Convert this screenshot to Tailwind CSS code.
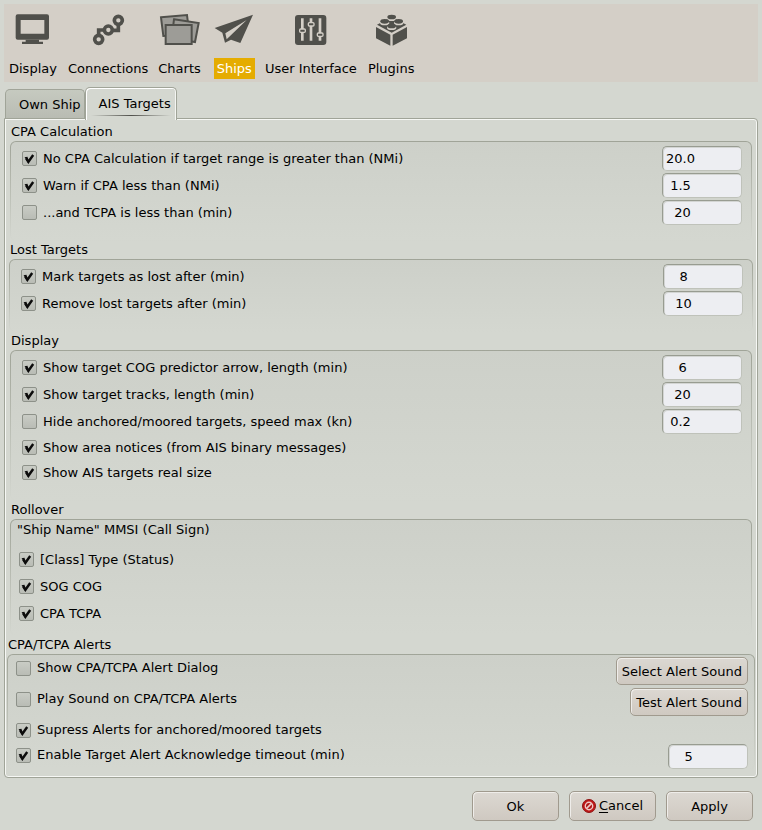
<!DOCTYPE html>
<html lang="en">
<head>
<meta charset="utf-8">
<title>Options</title>
<script src="https://cdn.jsdelivr.net/npm/@tailwindcss/browser@4"></script>
</head>
<body class="min-h-screen bg-[#d4d7d0] p-1 font-['DejaVu_Sans',sans-serif] text-[13px] leading-[18px] text-black">

<svg class="hidden" aria-hidden="true">
  <symbol id="tick" viewBox="0 0 15 15"><path d="M4.2 7.6 6.4 10.8 11.2 4" fill="none" stroke="#0c0c0c" stroke-width="2.4"/><path d="M2.6 6.2 5.4 5.8 6.8 9.6 6.2 12.4z" fill="#0c0c0c"/></symbol>
</svg>

<nav class="flex h-[78px] items-start gap-[5px] bg-[#d4cfc7] pt-[9px] pl-[2px]">
  <button class="flex flex-col items-center gap-3">
    <svg class="h-[33px] w-[35px]" viewBox="45 39 105 99" fill="#50504b"><path fill-rule="evenodd" d="M53 43H141q6 0 6 6V113q0 6-6 6H53q-6 0-6-6V49q0-6 6-6ZM62 60V101H133V60Z"/><path d="M77 119H117V125H129V132H66V125H77Z"/></svg>
    <span class="px-[3px] leading-[21px]">Display</span>
  </button>
  <button class="flex flex-col items-center gap-3">
    <svg class="h-[33px] w-[33px]" viewBox="270 39 99 99" fill="none" stroke="#50504b"><circle cx="290" cy="118" r="12" stroke-width="11"/><circle cx="319" cy="90" r="12" stroke-width="11"/><circle cx="349" cy="61" r="12" stroke-width="11"/><path d="M290 106V90H306M332 91H349V75" stroke-width="11"/></svg>
    <span class="px-[3px] leading-[21px]">Connections</span>
  </button>
  <button class="-ml-px flex flex-col items-center gap-3">
    <svg class="h-[33px] w-[42px]" viewBox="474 39 126 99" fill="#9d9c97" stroke="#50504b" stroke-width="6"><path d="M480 52 558 45 565 103 487 108Z"/><path d="M519 58 593 69 582 126 512 114Z"/><path d="M494 75H572V132H494Z"/></svg>
    <span class="px-[3px] leading-[21px]">Charts</span>
  </button>
  <button class="ml-[5px] flex flex-col items-center gap-3" aria-current="page">
    <svg class="h-[33px] w-[40px]" viewBox="639 39 120 99" fill="#50504b"><path fill-rule="evenodd" d="M756 44 718 129 690 119 672 128 664 98 641 84ZM737 60 673 100 677 118Z"/></svg>
    <span class="bg-[#e5ac00] px-[3px] leading-[21px] text-white">Ships</span>
  </button>
  <button class="ml-[2px] flex flex-col items-center gap-3">
    <svg class="h-[33px] w-[33px]" viewBox="285 39 99 99"><rect x="288" y="45" width="94" height="90" rx="9" fill="#50504b"/><g stroke="#d4cfc7" fill="#50504b"><path d="M310 55V122M336 55V122M363 55V122" stroke-width="8"/><rect x="302" y="87" width="17" height="10" rx="3" stroke-width="4"/><rect x="328" y="68" width="17" height="10" rx="3" stroke-width="4"/><rect x="355" y="99" width="17" height="10" rx="3" stroke-width="4"/></g></svg>
    <span class="px-[3px] leading-[21px]">User Interface</span>
  </button>
  <button class="flex flex-col items-center gap-3">
    <svg class="h-[33px] w-[33px]" viewBox="522 39 99 99" fill="#50504b"><path d="M525 81 568 104V137L525 115ZM618 81 575 104V137L618 115Z"/><path d="M528 74 572 50 616 74 572 98Z"/><g fill="#d4cfc7"><ellipse cx="572" cy="56" rx="14" ry="7"/><ellipse cx="551" cy="69" rx="14" ry="7"/><ellipse cx="593" cy="69" rx="14" ry="7"/><ellipse cx="572" cy="83" rx="14" ry="7"/></g><ellipse cx="572" cy="51" rx="13" ry="7"/><ellipse cx="551" cy="64" rx="13" ry="7"/><ellipse cx="593" cy="64" rx="13" ry="7"/><ellipse cx="572" cy="78" rx="13" ry="7"/></svg>
    <span class="px-[3px] leading-[21px]">Plugins</span>
  </button>
</nav>

<main>
  <div class="relative z-10 -mb-[2px] flex items-end pt-[5px] pl-px" role="tablist">
    <button role="tab" aria-selected="false" class="mb-[2px] h-[29px] rounded-t-[5px] border border-b-0 border-[#a0a498] bg-linear-to-b from-[#c6cac0] to-[#b9bcb3] pt-px pr-[3px] pl-[13px]">Own Ship</button>
    <button role="tab" aria-selected="true" class="flex h-[33px] flex-col rounded-t-[5px] border border-b-0 border-[#a0a498] bg-[#d4d7d0] px-[5px] pt-[7px] shadow-[inset_1px_1px_0_#fff,inset_-1px_0_0_#f4f5f2]"><span class="pl-[8px]">AIS Targets</span><span class="mt-[2px] h-px w-full bg-linear-to-r from-transparent via-[#50504b] to-transparent"></span></button>
  </div>

  <div role="tabpanel" class="rounded-[4px] rounded-tl-none border border-[#a0a498] px-px pt-[4px] pb-[7px] shadow-[inset_0_0_0_1px_#f6f7f4]">

    <section class="px-[4px]">
      <h2 class="pl-px">CPA Calculation</h2>
      <div class="rounded-[6px] bg-linear-to-b from-[#a0a498] to-[#d4d7d0] p-px">
        <div class="flex flex-col gap-[2px] rounded-[5px] bg-linear-to-b from-[#cdd0c9] to-[#d4d7d0] pt-[4px] pr-[9px] pb-[15px] pl-[11px]">
          <div class="flex h-[25px] items-center justify-between">
            <label class="flex items-center gap-[6px]"><span class="grid"><input type="checkbox" checked class="peer col-start-1 row-start-1 h-[15px] w-[15px] appearance-none rounded-[2px] border border-[#8d9189] bg-linear-to-b from-[#c9ccc5] to-[#b9bcb5]"><svg class="pointer-events-none invisible col-start-1 row-start-1 h-[15px] w-[15px] peer-checked:visible"><use href="#tick"/></svg></span>No CPA Calculation if target range is greater than (NMi)</label>
            <input type="text" aria-label="Maximum target range (NMi)" value="20.0" class="h-[25px] w-[80px] rounded-[5px] border border-[#bfc2ba] border-t-[#989c91] border-l-[#989c91] bg-[#edeef2] pl-[3px] shadow-[inset_1px_1px_0_#d3d5d3]">
          </div>
          <div class="flex h-[25px] items-center justify-between">
            <label class="flex items-center gap-[6px]"><span class="grid"><input type="checkbox" checked class="peer col-start-1 row-start-1 h-[15px] w-[15px] appearance-none rounded-[2px] border border-[#8d9189] bg-linear-to-b from-[#c9ccc5] to-[#b9bcb5]"><svg class="pointer-events-none invisible col-start-1 row-start-1 h-[15px] w-[15px] peer-checked:visible"><use href="#tick"/></svg></span>Warn if CPA less than (NMi)</label>
            <input type="text" aria-label="Minimum CPA (NMi)" value=" 1.5" class="h-[25px] w-[80px] rounded-[5px] border border-[#bfc2ba] border-t-[#989c91] border-l-[#989c91] bg-[#edeef2] pl-[3px] shadow-[inset_1px_1px_0_#d3d5d3]">
          </div>
          <div class="flex h-[25px] items-center justify-between">
            <label class="flex items-center gap-[6px]"><span class="grid"><input type="checkbox" class="peer col-start-1 row-start-1 h-[15px] w-[15px] appearance-none rounded-[2px] border border-[#8d9189] bg-linear-to-b from-[#c9ccc5] to-[#b9bcb5]"><svg class="pointer-events-none invisible col-start-1 row-start-1 h-[15px] w-[15px] peer-checked:visible"><use href="#tick"/></svg></span>...and TCPA is less than (min)</label>
            <input type="text" aria-label="Minimum TCPA (min)" value="  20" class="h-[25px] w-[80px] rounded-[5px] border border-[#bfc2ba] border-t-[#989c91] border-l-[#989c91] bg-[#edeef2] pl-[3px] shadow-[inset_1px_1px_0_#d3d5d3]">
          </div>
        </div>
      </div>
    </section>

    <section class="px-[3px]">
      <h2 class="pl-px">Lost Targets</h2>
      <div class="rounded-[6px] bg-linear-to-b from-[#a0a498] to-[#d4d7d0] p-px">
        <div class="flex flex-col gap-[2px] rounded-[5px] bg-linear-to-b from-[#cdd0c9] to-[#d4d7d0] pt-[4px] pr-[9px] pb-[15px] pl-[11px]">
          <div class="flex h-[25px] items-center justify-between">
            <label class="flex items-center gap-[6px]"><span class="grid"><input type="checkbox" checked class="peer col-start-1 row-start-1 h-[15px] w-[15px] appearance-none rounded-[2px] border border-[#8d9189] bg-linear-to-b from-[#c9ccc5] to-[#b9bcb5]"><svg class="pointer-events-none invisible col-start-1 row-start-1 h-[15px] w-[15px] peer-checked:visible"><use href="#tick"/></svg></span>Mark targets as lost after (min)</label>
            <input type="text" aria-label="Mark lost after (min)" value="   8" class="h-[25px] w-[80px] rounded-[5px] border border-[#bfc2ba] border-t-[#989c91] border-l-[#989c91] bg-[#edeef2] pl-[3px] shadow-[inset_1px_1px_0_#d3d5d3]">
          </div>
          <div class="flex h-[25px] items-center justify-between">
            <label class="flex items-center gap-[6px]"><span class="grid"><input type="checkbox" checked class="peer col-start-1 row-start-1 h-[15px] w-[15px] appearance-none rounded-[2px] border border-[#8d9189] bg-linear-to-b from-[#c9ccc5] to-[#b9bcb5]"><svg class="pointer-events-none invisible col-start-1 row-start-1 h-[15px] w-[15px] peer-checked:visible"><use href="#tick"/></svg></span>Remove lost targets after (min)</label>
            <input type="text" aria-label="Remove lost after (min)" value="  10" class="h-[25px] w-[80px] rounded-[5px] border border-[#bfc2ba] border-t-[#989c91] border-l-[#989c91] bg-[#edeef2] pl-[3px] shadow-[inset_1px_1px_0_#d3d5d3]">
          </div>
        </div>
      </div>
    </section>

    <section class="px-[4px]">
      <h2 class="pl-px">Display</h2>
      <div class="rounded-[6px] bg-linear-to-b from-[#a0a498] to-[#d4d7d0] p-px">
        <div class="flex flex-col gap-[2px] rounded-[5px] bg-linear-to-b from-[#cdd0c9] to-[#d4d7d0] pt-[4px] pr-[9px] pb-4 pl-[11px]">
          <div class="flex h-[25px] items-center justify-between">
            <label class="flex items-center gap-[6px]"><span class="grid"><input type="checkbox" checked class="peer col-start-1 row-start-1 h-[15px] w-[15px] appearance-none rounded-[2px] border border-[#8d9189] bg-linear-to-b from-[#c9ccc5] to-[#b9bcb5]"><svg class="pointer-events-none invisible col-start-1 row-start-1 h-[15px] w-[15px] peer-checked:visible"><use href="#tick"/></svg></span>Show target COG predictor arrow, length (min)</label>
            <input type="text" aria-label="COG predictor length (min)" value="   6" class="h-[25px] w-[80px] rounded-[5px] border border-[#bfc2ba] border-t-[#989c91] border-l-[#989c91] bg-[#edeef2] pl-[3px] shadow-[inset_1px_1px_0_#d3d5d3]">
          </div>
          <div class="flex h-[25px] items-center justify-between">
            <label class="flex items-center gap-[6px]"><span class="grid"><input type="checkbox" checked class="peer col-start-1 row-start-1 h-[15px] w-[15px] appearance-none rounded-[2px] border border-[#8d9189] bg-linear-to-b from-[#c9ccc5] to-[#b9bcb5]"><svg class="pointer-events-none invisible col-start-1 row-start-1 h-[15px] w-[15px] peer-checked:visible"><use href="#tick"/></svg></span>Show target tracks, length (min)</label>
            <input type="text" aria-label="Track length (min)" value="  20" class="h-[25px] w-[80px] rounded-[5px] border border-[#bfc2ba] border-t-[#989c91] border-l-[#989c91] bg-[#edeef2] pl-[3px] shadow-[inset_1px_1px_0_#d3d5d3]">
          </div>
          <div class="flex h-[25px] items-center justify-between">
            <label class="flex items-center gap-[6px]"><span class="grid"><input type="checkbox" class="peer col-start-1 row-start-1 h-[15px] w-[15px] appearance-none rounded-[2px] border border-[#8d9189] bg-linear-to-b from-[#c9ccc5] to-[#b9bcb5]"><svg class="pointer-events-none invisible col-start-1 row-start-1 h-[15px] w-[15px] peer-checked:visible"><use href="#tick"/></svg></span>Hide anchored/moored targets, speed max (kn)</label>
            <input type="text" aria-label="Moored speed max (kn)" value=" 0.2" class="h-[25px] w-[80px] rounded-[5px] border border-[#bfc2ba] border-t-[#989c91] border-l-[#989c91] bg-[#edeef2] pl-[3px] shadow-[inset_1px_1px_0_#d3d5d3]">
          </div>
          <label class="flex h-[23px] items-center gap-[6px]"><span class="grid"><input type="checkbox" checked class="peer col-start-1 row-start-1 h-[15px] w-[15px] appearance-none rounded-[2px] border border-[#8d9189] bg-linear-to-b from-[#c9ccc5] to-[#b9bcb5]"><svg class="pointer-events-none invisible col-start-1 row-start-1 h-[15px] w-[15px] peer-checked:visible"><use href="#tick"/></svg></span>Show area notices (from AIS binary messages)</label>
          <label class="flex h-[23px] items-center gap-[6px]"><span class="grid"><input type="checkbox" checked class="peer col-start-1 row-start-1 h-[15px] w-[15px] appearance-none rounded-[2px] border border-[#8d9189] bg-linear-to-b from-[#c9ccc5] to-[#b9bcb5]"><svg class="pointer-events-none invisible col-start-1 row-start-1 h-[15px] w-[15px] peer-checked:visible"><use href="#tick"/></svg></span>Show AIS targets real size</label>
        </div>
      </div>
    </section>

    <section class="px-[4px]">
      <h2 class="pl-px">Rollover</h2>
      <div class="rounded-[6px] bg-linear-to-b from-[#a0a498] to-[#d4d7d0] p-px">
        <div class="flex flex-col gap-[2px] rounded-[5px] bg-linear-to-b from-[#cdd0c9] to-[#d4d7d0] pr-[9px] pb-[9px] pl-[8px]">
          <p class="-ml-[2px] h-[25px] leading-[20px]">"Ship Name" MMSI (Call Sign)</p>
          <label class="flex h-[25px] items-center gap-[6px]"><span class="grid"><input type="checkbox" checked class="peer col-start-1 row-start-1 h-[15px] w-[15px] appearance-none rounded-[2px] border border-[#8d9189] bg-linear-to-b from-[#c9ccc5] to-[#b9bcb5]"><svg class="pointer-events-none invisible col-start-1 row-start-1 h-[15px] w-[15px] peer-checked:visible"><use href="#tick"/></svg></span>[Class] Type (Status)</label>
          <label class="flex h-[25px] items-center gap-[6px]"><span class="grid"><input type="checkbox" checked class="peer col-start-1 row-start-1 h-[15px] w-[15px] appearance-none rounded-[2px] border border-[#8d9189] bg-linear-to-b from-[#c9ccc5] to-[#b9bcb5]"><svg class="pointer-events-none invisible col-start-1 row-start-1 h-[15px] w-[15px] peer-checked:visible"><use href="#tick"/></svg></span>SOG COG</label>
          <label class="flex h-[25px] items-center gap-[6px]"><span class="grid"><input type="checkbox" checked class="peer col-start-1 row-start-1 h-[15px] w-[15px] appearance-none rounded-[2px] border border-[#8d9189] bg-linear-to-b from-[#c9ccc5] to-[#b9bcb5]"><svg class="pointer-events-none invisible col-start-1 row-start-1 h-[15px] w-[15px] peer-checked:visible"><use href="#tick"/></svg></span>CPA TCPA</label>
        </div>
      </div>
    </section>

    <section class="px-px">
      <h2 class="pl-px">CPA/TCPA Alerts</h2>
      <div class="rounded-[6px] bg-linear-to-b from-[#a0a498] to-[#d4d7d0] p-px">
        <div class="flex flex-col gap-[3px] rounded-[5px] bg-linear-to-b from-[#cdd0c9] to-[#d4d7d0] pt-[2px] pr-[6px] pl-[8px]">
          <div class="flex h-7 items-start justify-between">
            <label class="flex h-[22px] items-center gap-[6px]"><span class="grid"><input type="checkbox" class="peer col-start-1 row-start-1 h-[15px] w-[15px] appearance-none rounded-[2px] border border-[#8d9189] bg-linear-to-b from-[#c9ccc5] to-[#b9bcb5]"><svg class="pointer-events-none invisible col-start-1 row-start-1 h-[15px] w-[15px] peer-checked:visible"><use href="#tick"/></svg></span>Show CPA/TCPA Alert Dialog</label>
            <button class="h-7 rounded-[5px] border border-[#a09a8e] bg-linear-to-b from-[#dcd8d2] to-[#cfc9c1] px-[5px] pt-px shadow-[inset_1px_1px_0_#efedea]">Select Alert Sound</button>
          </div>
          <div class="flex h-7 items-start justify-between">
            <label class="flex h-[22px] items-center gap-[6px]"><span class="grid"><input type="checkbox" class="peer col-start-1 row-start-1 h-[15px] w-[15px] appearance-none rounded-[2px] border border-[#8d9189] bg-linear-to-b from-[#c9ccc5] to-[#b9bcb5]"><svg class="pointer-events-none invisible col-start-1 row-start-1 h-[15px] w-[15px] peer-checked:visible"><use href="#tick"/></svg></span>Play Sound on CPA/TCPA Alerts</label>
            <button class="h-7 rounded-[5px] border border-[#a09a8e] bg-linear-to-b from-[#dcd8d2] to-[#cfc9c1] px-[5px] pt-px shadow-[inset_1px_1px_0_#efedea]">Test Alert Sound</button>
          </div>
          <label class="flex h-[22px] items-center gap-[6px]"><span class="grid"><input type="checkbox" checked class="peer col-start-1 row-start-1 h-[15px] w-[15px] appearance-none rounded-[2px] border border-[#8d9189] bg-linear-to-b from-[#c9ccc5] to-[#b9bcb5]"><svg class="pointer-events-none invisible col-start-1 row-start-1 h-[15px] w-[15px] peer-checked:visible"><use href="#tick"/></svg></span>Supress Alerts for anchored/moored targets</label>
          <div class="flex h-[25px] items-start justify-between">
            <label class="flex h-[22px] items-center gap-[6px]"><span class="grid"><input type="checkbox" checked class="peer col-start-1 row-start-1 h-[15px] w-[15px] appearance-none rounded-[2px] border border-[#8d9189] bg-linear-to-b from-[#c9ccc5] to-[#b9bcb5]"><svg class="pointer-events-none invisible col-start-1 row-start-1 h-[15px] w-[15px] peer-checked:visible"><use href="#tick"/></svg></span>Enable Target Alert Acknowledge timeout (min)</label>
            <input type="text" aria-label="Acknowledge timeout (min)" value="   5" class="h-[25px] w-[80px] rounded-[5px] border border-[#bfc2ba] border-t-[#989c91] border-l-[#989c91] bg-[#edeef2] pl-[3px] shadow-[inset_1px_1px_0_#d3d5d3]">
          </div>
        </div>
      </div>
    </section>
  </div>
</main>

<footer class="flex justify-end gap-[10px] pt-[13px] pr-[5px]">
  <button class="h-[30px] w-[87px] rounded-[5px] border border-[#a09a8e] bg-linear-to-b from-[#dcd8d2] to-[#cfc9c1] pt-px shadow-[inset_1px_1px_0_#efedea]">Ok</button>
  <button class="flex h-[30px] w-[87px] items-center justify-center gap-[3px] rounded-[5px] border border-[#a09a8e] bg-linear-to-b from-[#dcd8d2] to-[#cfc9c1] shadow-[inset_1px_1px_0_#efedea]">
    <svg class="h-[14px] w-[14px]" viewBox="0 0 14 14"><circle cx="7" cy="7" r="6.5" fill="#c01818" stroke="#8e1414"/><circle cx="7" cy="7" r="3.7" fill="#b01515" stroke="#eec9c6" stroke-width="1.4"/><path d="M4.4 9.6 9.6 4.4" stroke="#eec9c6" stroke-width="1.6"/></svg>
    <span><span class="underline underline-offset-2">C</span>ancel</span>
  </button>
  <button class="h-[30px] w-[87px] rounded-[5px] border border-[#a09a8e] bg-linear-to-b from-[#dcd8d2] to-[#cfc9c1] pt-px shadow-[inset_1px_1px_0_#efedea]">Apply</button>
</footer>
</body>
</html>
